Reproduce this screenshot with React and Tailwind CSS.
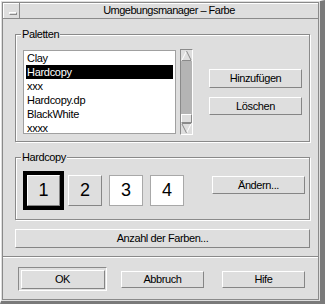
// Umgebungsmanager – Farbe (CDE style palette dialog)
import React from 'react';

const font = "font-['Liberation_Sans',Arial,sans-serif]";

// raised Motif-style push button
function Btn({ children, className = '' }) {
  return (
    <div
      className={`flex items-center justify-center bg-[#dedede] border border-t-white border-l-white border-r-[#858585] border-b-[#858585] text-[11px] tracking-[-0.4px] text-black ${className}`}
    >
      {children}
    </div>
  );
}

// etched group frame with a label over its top edge
function Group({ label, className = '', children }) {
  return (
    <div
      className={`relative border border-[#8a8a8a] shadow-[inset_1px_1px_0_#fff,1px_1px_0_#fff] ${className}`}
    >
      <span className="absolute -top-[8px] left-[5px] bg-[#dedede] px-px text-[11px] leading-[14px] tracking-[-0.4px]">
        {label}
      </span>
      {children}
    </div>
  );
}

function Arrow({ down }) {
  return (
    <svg width="11" height="11" viewBox="0 0 11 11" className={down ? 'rotate-180' : ''}>
      <line x1="5.5" y1="1" x2="1" y2="10" stroke="#ffffff" strokeWidth="1" />
      <line x1="5.5" y1="1" x2="10" y2="10" stroke="#8a8a8a" strokeWidth="1" />
      <line x1="1" y1="10.5" x2="10" y2="10.5" stroke="#8a8a8a" strokeWidth="1" />
    </svg>
  );
}

const palettes = ['Clay', 'Hardcopy', 'xxx', 'Hardcopy.dp', 'BlackWhite', 'xxxx'];

export default function App() {
  return (
    <div
      className={`${font} w-[325px] h-[304px] bg-[#dedede] text-black border-t border-l border-t-white border-l-white border-r-[5px] border-b-[3px] border-r-[#7a7a7a] border-b-[#7a7a7a] p-px`}
    >
      <div className="h-full flex flex-col border border-[#8a8a8a]">
        {/* ── Title bar */}
        <div className="h-[16px] flex border-b border-[#8a8a8a] shadow-[inset_1px_1px_0_#fff]">
          <div className="w-[17px] border-r border-[#8a8a8a] flex items-end pl-[6px] pb-[3px]">
            <div className="w-[8px] h-[3px] border border-t-white border-l-white border-r-[#8a8a8a] border-b-[#8a8a8a]" />
          </div>
          <div className="flex-1 flex items-center justify-center text-[11px] tracking-[-0.5px] leading-none">
            Umgebungsmanager – Farbe
          </div>
        </div>

        {/* ── Body */}
        <div className="flex flex-col pl-[12px] pr-[8px] pt-[15px]">
          {/* Paletten */}
          <Group label="Paletten" className="h-[108px]">
            <div className="flex items-start pl-[7px] pt-[15px]">
              <div className="w-[153px] h-[84px] bg-white border border-[#a0a0a0] text-[11px] tracking-[-0.3px] overflow-hidden">
                {palettes.map((p, i) => (
                  <div
                    key={p}
                    className={`h-[14px] leading-[14px] mx-[2px] pl-px ${
                      i === 1 ? 'bg-black text-white' : ''
                    }`}
                  >
                    {p}
                  </div>
                ))}
              </div>
              {/* scrollbar */}
              <div className="ml-[4px] -mt-px w-[13px] h-[86px] flex flex-col border border-t-[#8a8a8a] border-l-[#8a8a8a] border-r-white border-b-white bg-[#b4b4b4]">
                <div className="h-[11px] bg-[#dedede] flex items-center justify-center">
                  <Arrow />
                </div>
                <div className="flex-1" />
                <div className="h-[9px] bg-[#dedede] border border-t-white border-l-white border-r-[#8a8a8a] border-b-[#8a8a8a]" />
                <div className="h-[11px] bg-[#dedede] flex items-center justify-center">
                  <Arrow down />
                </div>
              </div>
              <div className="ml-[16px] mt-[19px] flex flex-col gap-[9px]">
                <Btn className="w-[93px] h-[19px]">Hinzufügen</Btn>
                <Btn className="w-[93px] h-[18px]">Löschen</Btn>
              </div>
            </div>
          </Group>

          {/* Hardcopy */}
          <Group label="Hardcopy" className="h-[63px] mt-[15px]">
            <div className="flex items-start pl-[7px] pt-[13px]">
              <div className="w-[41px] h-[39px] border-[4px] border-black">
                <Btn className="w-full h-full text-[18px] tracking-normal">1</Btn>
              </div>
              <Btn className="ml-[4px] mt-[4px] w-[34px] h-[31px] text-[18px] tracking-normal">2</Btn>
              <div className="ml-[7px] mt-[4px] w-[34px] h-[31px] bg-white border border-[#a8a8a8] flex items-center justify-center text-[18px]">
                3
              </div>
              <div className="ml-[7px] mt-[4px] w-[34px] h-[31px] bg-white border border-[#a8a8a8] flex items-center justify-center text-[18px]">
                4
              </div>
              <Btn className="ml-[28px] mt-[5px] w-[93px] h-[18px]">Ändern...</Btn>
            </div>
          </Group>

          <Btn className="mt-[9px] h-[19px]">Anzahl der Farben...</Btn>
        </div>

        {/* ── Separator */}
        <div className="mt-[8px] border-t border-b border-t-[#8a8a8a] border-b-white" />

        {/* ── Footer buttons */}
        <div className="flex items-center pl-[15px] mt-[9px]">
          <div className="w-[89px] h-[24px] flex items-center justify-center border border-t-[#8a8a8a] border-l-[#8a8a8a] border-r-white border-b-white">
            <Btn className="w-[84px] h-[19px]">OK</Btn>
          </div>
          <Btn className="ml-[14px] w-[83px] h-[17px]">Abbruch</Btn>
          <Btn className="ml-[18px] w-[83px] h-[17px]">Hife</Btn>
        </div>
      </div>
    </div>
  );
}
